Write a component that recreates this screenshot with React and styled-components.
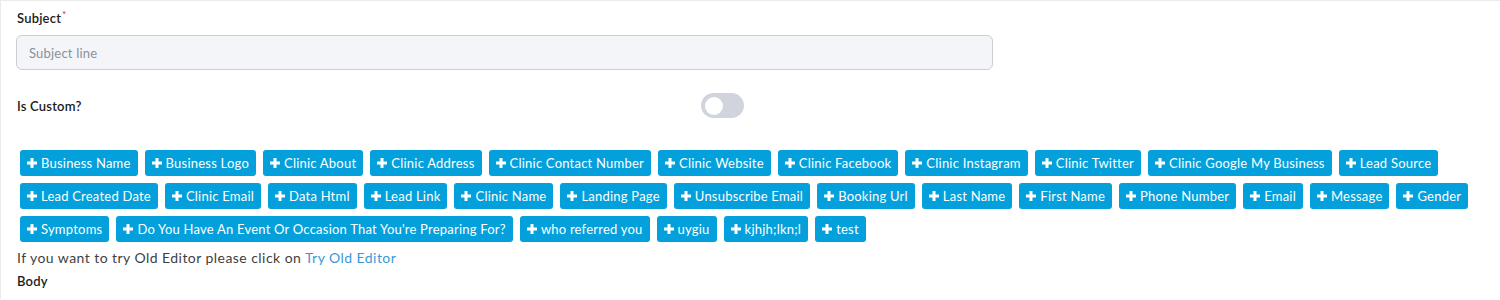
import styled, { createGlobalStyle } from "styled-components"

const GlobalStyle = createGlobalStyle`
  body {
    margin: 0;
    background: #fff;
    font-family: Lato, "Open Sans", sans-serif;
  }
`

const tags = [
  "Business Name", "Business Logo", "Clinic About", "Clinic Address", "Clinic Contact Number",
  "Clinic Website", "Clinic Facebook", "Clinic Instagram", "Clinic Twitter",
  "Clinic Google My Business", "Lead Source", "Lead Created Date", "Clinic Email", "Data Html",
  "Lead Link", "Clinic Name", "Landing Page", "Unsubscribe Email", "Booking Url", "Last Name",
  "First Name", "Phone Number", "Email", "Message", "Gender", "Symptoms",
  "Do You Have An Event Or Occasion That You're Preparing For?", "who referred you", "uygiu",
  "kjhjh;lkn;l", "test",
]

const Card = styled.div`
  border-top: 1px solid #ebebeb;
  border-left: 1px solid #ebebeb;
  padding: 8px 15px 0 15px;
  height: 299px;
  box-sizing: border-box;
`
const Label = styled.label`
  display: block;
  font-size: 13px;
  line-height: 18px;
  font-weight: 600;
  letter-spacing: 0.2px;
  color: #1c1c1c;
  margin-left: 1px;
`
const Required = styled.sup`
  color: #e53935;
  font-size: 10px;
  line-height: 0;
  margin-left: 1px;
`
const Input = styled.input`
  display: block;
  box-sizing: border-box;
  width: 977px;
  height: 35px;
  margin-top: 8px;
  padding: 0 12px;
  border: 1px solid #cdcdcd;
  border-radius: 6px;
  background: #f4f5f9;
  font-family: inherit;
  font-size: 13px;
  letter-spacing: 0.2px;
  color: #333;
  outline: none;
  &::placeholder {
    color: #8b9099;
  }
`
const CustomRow = styled.div`
  display: flex;
  align-items: center;
  height: 25px;
  margin-top: 23px;
`
const RowLabel = styled(Label)`
  width: 684px;
`
const Toggle = styled.button`
  width: 43px;
  height: 25px;
  border: none;
  border-radius: 13px;
  background: #d0d5dd;
  padding: 0 0 0 4px;
  display: flex;
  align-items: center;
  cursor: pointer;
  &::after {
    content: "";
    width: 18px;
    height: 18px;
    border-radius: 50%;
    background: #fff;
  }
`
const TagList = styled.div`
  display: flex;
  flex-wrap: wrap;
  gap: 7px;
  margin: 32px 0 0 4px;
`
const Tag = styled.button`
  display: inline-flex;
  align-items: center;
  gap: 4px;
  height: 26px;
  padding: 0 7px;
  border: none;
  border-radius: 3px;
  background: #03a0dc;
  color: #fff;
  font-family: inherit;
  font-size: 13px;
  letter-spacing: 0.22px;
  cursor: pointer;
`
const Hint = styled.p`
  margin: 6px 0 0 1px;
  font-size: 14px;
  line-height: 20px;
  letter-spacing: 0.45px;
  color: #3f3f3f;
`
const Link = styled.a`
  color: #3a98d8;
  text-decoration: none;
`
const BodyLabel = styled(Label)`
  margin-top: 4px;
`

const Plus = () => (
  <svg width="10" height="10" viewBox="0 0 10 10">
    <path d="M5 0v10M0 5h10" stroke="#fff" strokeWidth="3" />
  </svg>
)

const App = () => {
  return (
    <Card>
      <GlobalStyle />
      <Label>Subject<Required>*</Required></Label>
      <Input placeholder="Subject line" />
      <CustomRow>
        <RowLabel>Is Custom?</RowLabel>
        <Toggle aria-label="Is Custom?" />
      </CustomRow>
      <TagList>
        {tags.map((t) => (
          <Tag key={t}><Plus />{t}</Tag>
        ))}
      </TagList>
      <Hint>If you want to try Old Editor please click on <Link href="#">Try Old Editor</Link></Hint>
      <BodyLabel>Body</BodyLabel>
    </Card>
  )
}

export default App
